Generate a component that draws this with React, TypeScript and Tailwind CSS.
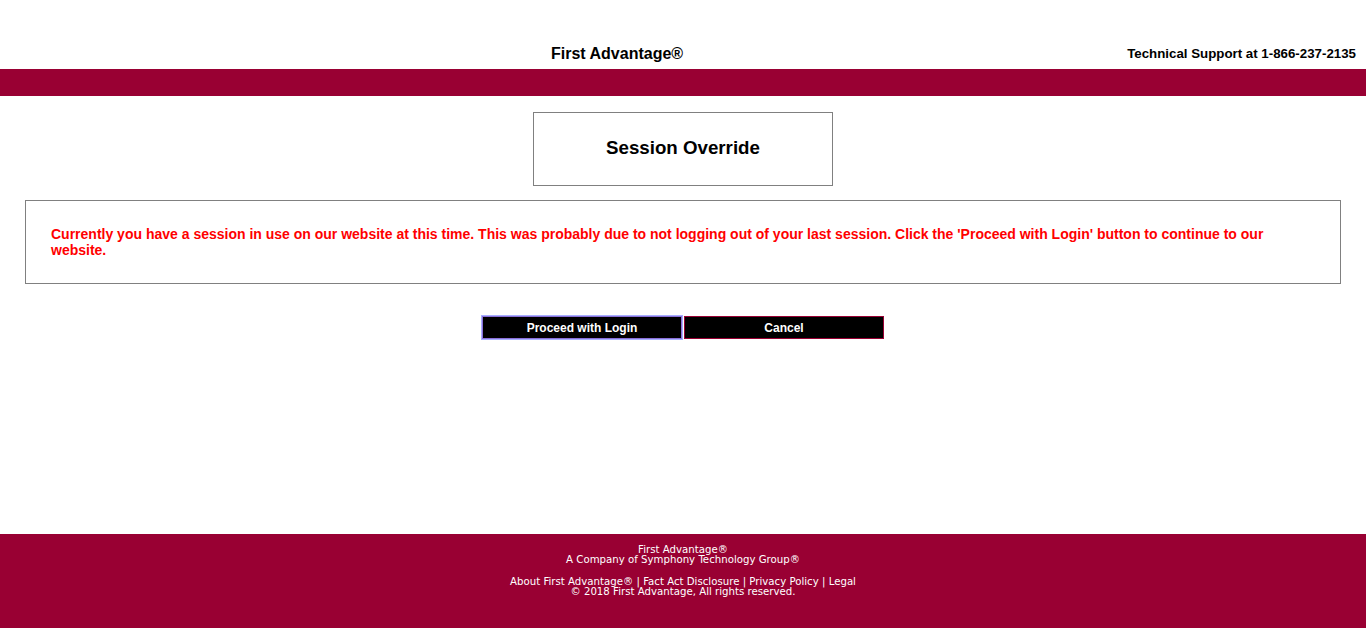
import React from "react";

export default function App() {
  return (
    <div
      className="flex h-[628px] flex-col bg-white text-black"
      style={{ fontFamily: '"Liberation Sans", Arial, sans-serif' }}
    >
      <header className="flex h-[69px] items-end pb-[6px]">
        <div className="w-[551px] shrink-0" />
        <div className="text-[16px] font-bold leading-[18px]">First Advantage®</div>
        <div className="flex-1" />
        <div className="pb-[2px] pr-[10px] text-[13.3px] font-bold leading-[15px]">
          Technical Support at 1-866-237-2135
        </div>
      </header>
      <div className="h-[27px] bg-[#990033]" />

      <main className="flex flex-1 flex-col">
        <div className="mx-auto mt-[16px] flex h-[74px] w-[300px] items-center justify-center border border-[#808080] pb-[2px]">
          <h1 className="text-[18.72px] font-bold leading-[22px]">Session Override</h1>
        </div>

        <div className="mx-[25px] mt-[14px] border border-[#808080] p-[25px]">
          <p className="text-[14px] font-bold leading-[16px] text-[#ff0000]">
            Currently you have a session in use on our website at this time. This was probably due to not
            logging out of your last session. Click the 'Proceed with Login' button to continue to our
            website.
          </p>
        </div>

        <div className="mt-[32px] flex justify-center gap-[2px]">
          <button className="h-[23px] w-[200px] border border-[#8a6fd8] bg-black text-[12px] font-bold text-white outline outline-1 outline-[#a8b0ff]">
            Proceed with Login
          </button>
          <button className="h-[23px] w-[200px] border border-[#990033] bg-black text-[12px] font-bold text-white">
            Cancel
          </button>
        </div>
      </main>

      <footer
        className="h-[94px] bg-[#990033] pt-[11px] text-center text-[10.2px] leading-[10px] text-white"
        style={{ fontFamily: '"DejaVu Sans", Verdana, sans-serif' }}
      >
        <div>First Advantage®</div>
        <div>A Company of Symphony Technology Group®</div>
        <div className="mt-[12px]">
          About First Advantage® | Fact Act Disclosure | Privacy Policy | Legal
        </div>
        <div>© 2018 First Advantage, All rights reserved.</div>
      </footer>
    </div>
  );
}
